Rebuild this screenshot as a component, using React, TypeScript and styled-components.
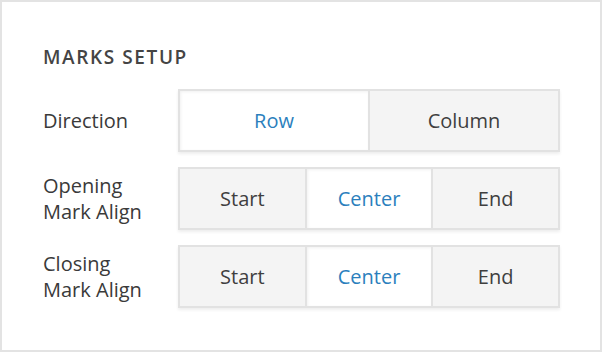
import React from 'react';
import styled, { createGlobalStyle } from 'styled-components';

const GlobalStyle = createGlobalStyle`
  html, body {
    margin: 0;
    padding: 0;
    background: #ffffff;
  }
  body {
    font-family: "Open Sans", "Liberation Sans", sans-serif;
  }
`;

const Panel = styled.div`
  box-sizing: border-box;
  width: 602px;
  height: 352px;
  border: 2px solid #e3e3e3;
  background: #ffffff;
  padding: 42px 40px 0 41px;
`;

const Title = styled.h2`
  margin: 0 0 19px 0;
  font-size: 19px;
  line-height: 26px;
  font-weight: 600;
  letter-spacing: 1.6px;
  color: #444444;
  text-transform: uppercase;
`;

const Rows = styled.div`
  display: flex;
  flex-direction: column;
  gap: 15px;
`;

const Row = styled.div`
  display: flex;
  align-items: center;
  justify-content: space-between;
`;

const Label = styled.div`
  width: 112px;
  flex: none;
  font-size: 20px;
  line-height: 26px;
  color: #3a3a3a;
`;

const Group = styled.div`
  display: flex;
  width: 382px;
  height: 63px;
  box-sizing: border-box;
  border: 2px solid #e2e2e2;
  background: #e2e2e2;
  gap: 2px;
  box-shadow: 0 2px 3px rgba(0, 0, 0, 0.07);
`;

const Option = styled.button<{ $active?: boolean }>`
  flex: 1;
  border: none;
  margin: 0;
  padding: 0 0 1px 0;
  font-family: inherit;
  font-size: 20px;
  color: ${({ $active }) => ($active ? '#2b7fbd' : '#3f3f3f')};
  background: ${({ $active }) => ($active ? '#ffffff' : '#f4f4f4')};
  box-shadow: ${({ $active }) => ($active ? 'inset 1px 1px 3px rgba(0, 0, 0, 0.06)' : 'none')};
  cursor: pointer;
`;

type Setting = {
  id: string;
  label: string;
  options: string[];
  active: string;
};

const settings: Setting[] = [
  { id: 'direction', label: 'Direction', options: ['Row', 'Column'], active: 'Row' },
  { id: 'opening', label: 'Opening Mark Align', options: ['Start', 'Center', 'End'], active: 'Center' },
  { id: 'closing', label: 'Closing Mark Align', options: ['Start', 'Center', 'End'], active: 'Center' },
];

const App: React.FC = () => {
  return (
    <>
      <GlobalStyle />
      <Panel>
        <Title>Marks Setup</Title>
        <Rows>
          {settings.map((s) => (
            <Row key={s.id}>
              <Label>{s.label}</Label>
              <Group>
                {s.options.map((opt) => (
                  <Option key={opt} $active={opt === s.active}>
                    {opt}
                  </Option>
                ))}
              </Group>
            </Row>
          ))}
        </Rows>
      </Panel>
    </>
  );
};

export default App;
